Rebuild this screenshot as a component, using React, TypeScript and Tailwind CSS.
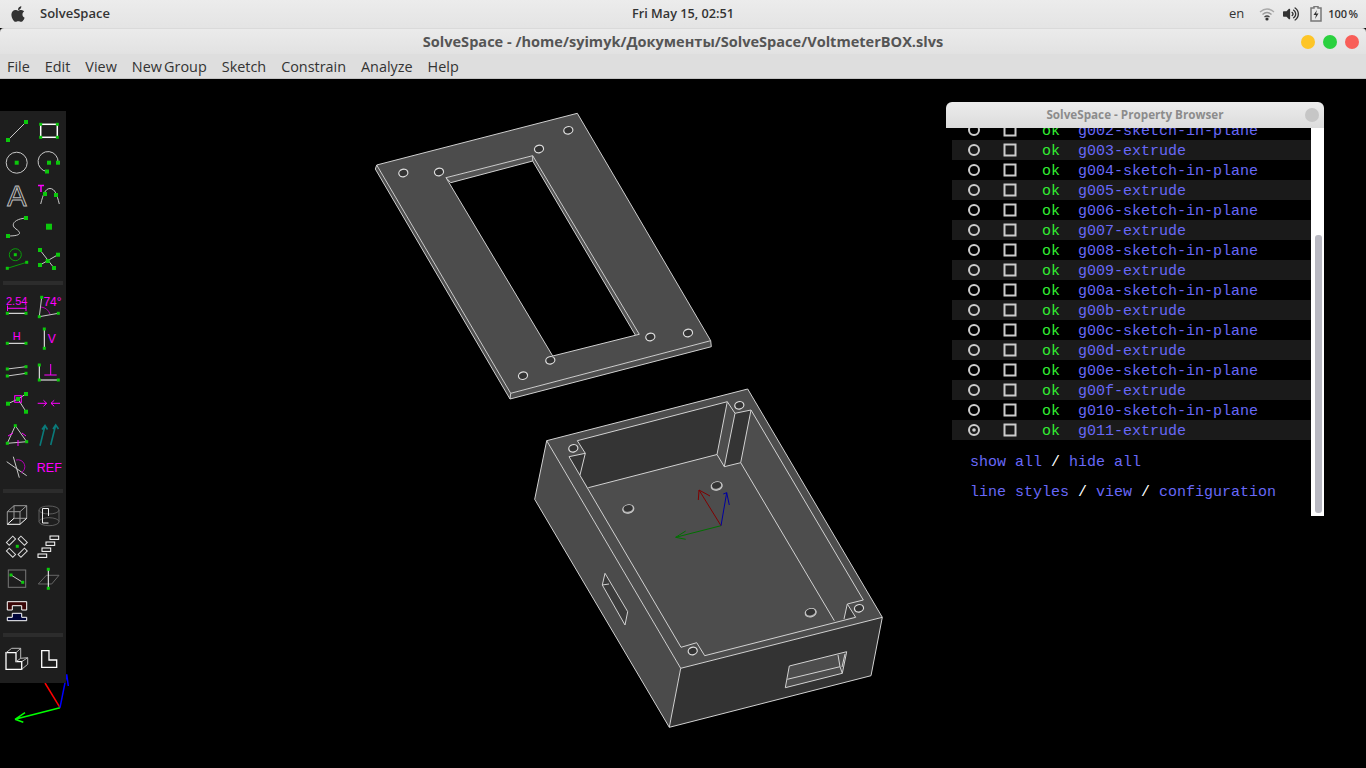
import React from "react";
import { FaApple, FaVolumeUp } from "react-icons/fa";

const GREEN = "#0cc80c";
const MAG = "#ff00ff";
const LN = "#c8c8c8";

const G = ({ x, y, s = 4 }: { x: number; y: number; s?: number }) => (
  <rect x={x - s / 2} y={y - s / 2} width={s} height={s} fill={GREEN} />
);
const L = ({ d, c = LN, w = 1 }: { d: string; c?: string; w?: number }) => (
  <path d={d} stroke={c} strokeWidth={w} fill="none" />
);
const T = ({ x, y, s, children, c = MAG, fam = "'Liberation Sans',sans-serif" }: { x: number; y: number; s: number; children: React.ReactNode; c?: string; fam?: string }) => (
  <text x={x} y={y} fontSize={s} fill={c} textAnchor="middle" fontFamily={fam}>{children}</text>
);

const Icon = ({ children, dy = 0 }: { children: React.ReactNode; dy?: number }) => (
  <svg width="32" height="32" viewBox={`0 ${dy} 32 32`} className="block">{children}</svg>
);

const section1 = [
  <Icon><L d="M7 25L25 7" /><G x={7} y={25} /><G x={25} y={7} /></Icon>,
  <Icon><rect x="7.7" y="9.3" width="16.6" height="13" fill="none" stroke="#fff" strokeWidth="1.5" /><G x={7.7} y={9.3} s={3} /><G x={24.3} y={9.3} s={3} /><G x={7.7} y={22.3} s={3} /><G x={24.3} y={22.3} s={3} /></Icon>,
  <Icon><circle cx="15.7" cy="15.7" r="10.5" fill="none" stroke={LN} /><G x={15.7} y={15.7} /></Icon>,
  <Icon><L d="M14 24.5A10 10 0 1 1 25 15.7" /><G x={16} y={15.7} /><G x={25} y={15.7} /><G x={14} y={24.5} /></Icon>,
  <Icon><text x="16" y="27" fontSize="29" textAnchor="middle" fill="none" stroke="#bbb" strokeWidth="1" fontFamily="'Liberation Sans',sans-serif">A</text></Icon>,
  <Icon><L d="M7.7 25C10 16 12 9.5 17 9.5C22 9.5 24 16 26.3 25" /><G x={12} y={15} /><G x={23} y={16} /><L d="M5 6.5H11M8 6.5V13" c={MAG} w={1.5} /></Icon>,
  <Icon><L d="M7 25C20 25 21 22 15 18C9 14 13 8 25 7" /><G x={7} y={25} /><G x={25} y={7} /></Icon>,
  <Icon><G x={16} y={15.7} s={6} /></Icon>,
  <Icon><circle cx="14.3" cy="11.7" r="6" fill="none" stroke="#0a9a0a" /><L d="M6.3 25.3L25.7 19.3" c="#0a9a0a" /><G x={14.3} y={11.7} s={3} /><G x={6.3} y={25.3} s={3} /><G x={25.7} y={19.3} s={3} /></Icon>,
  <Icon><L d="M7 7L21 25M7 22L25 11.7" /><G x={7} y={7} /><G x={25} y={11.7} /><G x={7} y={22} /><G x={21} y={25} /><G x={14.7} y={18} /></Icon>,
];

const section2 = [
  <Icon><T x={15.7} y={15} s={11}>2.54</T><L d="M6.3 18.3H25M6.5 15.5V21M25 15.5V21" c={MAG} /><L d="M6.3 23.3H25" c="#fff" /><G x={6.3} y={23.3} s={3} /><G x={25} y={23.3} s={3} /></Icon>,
  <Icon><T x={19.5} y={15.5} s={12}>74°</T><L d="M8.7 7.3L6.3 26.7L25.3 23.3" /><L d="M17 24A11 11 0 0 0 8 17" c="#b000b0" /><G x={8.7} y={7.3} s={3} /><G x={6.3} y={26.7} s={3} /><G x={25.3} y={23.3} s={3} /></Icon>,
  <Icon><T x={15.7} y={18} s={11}>H</T><L d="M6.3 21.3H25" c="#fff" /><G x={6.3} y={21.3} s={3} /><G x={25} y={21.3} s={3} /></Icon>,
  <Icon><L d="M11.3 7V26.3" c="#fff" /><G x={11.3} y={7} s={3} /><G x={11.3} y={26.3} s={3} /><T x={18.7} y={21} s={12}>V</T></Icon>,
  <Icon dy={-1}><L d="M6.3 14L25 11.7M6.3 21L25 18.3" /><G x={6.3} y={14} s={3} /><G x={25} y={11.7} s={3} /><G x={6.3} y={21} s={3} /><G x={25} y={18.3} s={3} /></Icon>,
  <Icon dy={-1}><L d="M6.3 10V25H25.3" c="#fff" /><L d="M11.3 20H23.7M17.7 9V20" c={MAG} /><G x={6.3} y={10} s={3} /><G x={6.3} y={25} s={3} /><G x={25.3} y={25} s={3} /></Icon>,
  <Icon dy={-1}><L d="M7 16.7L17 12L25 24.7M17 12L25 7" /><G x={7} y={16.7} /><G x={25} y={7} /><G x={25} y={24.7} /><G x={17} y={12} /><rect x="13.7" y="8.7" width="6.6" height="6.6" fill="none" stroke={MAG} /></Icon>,
  <Icon dy={-1}><L d="M4.7 16.3H13.7M10.5 13.3L13.7 16.3L10.5 19.3M27 16.3H18M21.2 13.3L18 16.3L21.2 19.3" c={MAG} /></Icon>,
  <Icon dy={-1}><L d="M14.3 6.7L6.3 24.3L25.7 22.7Z" /><L d="M7 17L12 14M21 14L25 17M17 21V27" c={MAG} /><G x={14.3} y={6.7} s={3} /><G x={6.3} y={24.3} s={3} /><G x={25.7} y={22.7} s={3} /></Icon>,
  <Icon dy={-1}><L d="M7 26.7L12 6.5M9 10.5L12 6.5L14.5 10.5M17.7 26L22.7 6M20 10L22.7 6L25.5 10" c="#0a7a7a" w={1.6} /></Icon>,
  <Icon dy={-1}><L d="M5.7 10.7L25.7 24.7M12.3 5.7L18.3 26.7" /><L d="M15 9A7 7 0 0 1 20 22" c="#b000b0" /></Icon>,
  <Icon dy={-1}><T x={16.3} y={20.5} s={12.5}>REF</T></Icon>,
];

const section3 = [
  <Icon><L d="M13 6.7H25.7V19.3H13ZM6.3 12.7H19V25.3M6.3 12.7V25.3M6.3 12.7L13 6.7M19 12.7L25.7 6.7" c="#999" /><L d="M6.3 25.3H19L25.7 19.3M6.3 25.3L13 19.3" c="#fff" /></Icon>,
  <Icon><ellipse cx="16" cy="11" rx="10" ry="4" fill="none" stroke="#5c5c5c" /><ellipse cx="16" cy="22.7" rx="10" ry="4" fill="none" stroke="#5c5c5c" /><L d="M6 11V22.7M26 11V22.7" c="#5c5c5c" /><L d="M15.5 9.5H9.5V24H15.5" c="#eee" /><L d="M15.5 9.5V17" c="#eee" /></Icon>,
  <Icon>
    <rect x="5.5" y="7.7" width="9" height="4" transform="rotate(-45 10 9.7)" fill="none" stroke="#ddd" />
    <rect x="17.2" y="7.7" width="9" height="4" transform="rotate(45 21.7 9.7)" fill="none" stroke="#ddd" />
    <rect x="5.5" y="19.7" width="9" height="4" transform="rotate(45 10 21.7)" fill="none" stroke="#ddd" />
    <rect x="17.2" y="19.7" width="9" height="4" transform="rotate(-45 21.7 21.7)" fill="none" stroke="#ddd" />
    <G x={16.3} y={15.3} s={3} />
  </Icon>,
  <Icon>{[[17, 5], [13, 11], [9, 17], [5, 23]].map(([x, y]) => <rect key={y} x={x} y={y} width="8.7" height="3.4" fill="none" stroke="#fff" />)}</Icon>,
  <Icon><rect x="7.3" y="7" width="17.4" height="17.3" fill="none" stroke="#777" /><L d="M10 12L21.7 19.3" /><G x={10} y={12} s={3} /><G x={21.7} y={19.3} s={3} /></Icon>,
  <Icon><path d="M5.3 21L13.3 12.3H26L18.7 21Z" fill="none" stroke="#666" /><L d="M15.3 6.3V25.3" c="#fff" /><G x={15.3} y={6.3} s={3} /><G x={15.3} y={25.3} s={3} /></Icon>,
  <Icon><path d="M6.3 6.7H25.7V15H20.7V10.7H11.3V15H6.3Z" fill="#3a0606" stroke="#fff" /><path d="M6.3 25.7V22.3H11.3V18.3H20.7V22.3H25.7V25.7Z" fill="#00063a" stroke="#fff" /></Icon>,
  <div />,
];

const section4 = [
  <Icon><L d="M5 9.7H15V18.7H20.7V26.3H5Z" c="#fff" w={1.3} /><L d="M5 9.7L10.7 5.3H19.7V15.3M15 9.7L19.7 5.3M15 18.7L19.7 15.3L26.7 14.7V21.3L20.7 26.3M20.7 18.7L26.7 14.7" c="#bbb" /></Icon>,
  <Icon><L d="M8.7 7.7H16V17H23.7V24.3H8.7Z" c="#fff" w={1.3} /></Icon>,
];

const groups = [
  "g002-sketch-in-plane", "g003-extrude", "g004-sketch-in-plane", "g005-extrude",
  "g006-sketch-in-plane", "g007-extrude", "g008-sketch-in-plane", "g009-extrude",
  "g00a-sketch-in-plane", "g00b-extrude", "g00c-sketch-in-plane", "g00d-extrude",
  "g00e-sketch-in-plane", "g00f-extrude", "g010-sketch-in-plane", "g011-extrude",
];

const Hole = ({ x, y, dark = "#2a2a2a", rx = 4.6, ry = 3.7 }: { x: number; y: number; dark?: string; rx?: number; ry?: number }) => (
  <ellipse cx={x} cy={y} rx={rx} ry={ry} transform={`rotate(-15 ${x} ${y})`} fill={dark} stroke="#ddd" strokeWidth="1.2" />
);

const Model = () => (
  <svg className="absolute inset-0" width="1366" height="689" viewBox="0 79 1366 689">
    {/* lid */}
    <path d="M375.3 169L376.7 165L510.7 393.3L710.7 340.7L711.3 346.7L510 399Z" fill="#4f4f4f" />
    <path d="M376.7 165L577.3 113.3L710.7 340.7L510.7 393.3Z" fill="#4c4c4c" />
    <path d="M446 177.7L532.7 155.7L639.3 334.3L552.7 356Z" fill="#000" />
    <path d="M446 177.7L532.7 155.7L639.3 334.3L635.3 335L532.7 161L450.7 182.7Z" fill="#555" />
    <g stroke="#cfcfcf" fill="none" strokeWidth="1">
      <path d="M375.3 169L510 399L711.3 346.7L710.7 340.7L577.3 113.3L376.7 165L510.7 393.3L710.7 340.7" />
      <path d="M376.7 165L375.3 169M510.7 393.3L510 399" />
      <path d="M446 177.7L532.7 155.7L639.3 334.3L552.7 356Z" />
      <path d="M450.7 182.7L532.7 161L635.3 335M446 177.7L450.7 182.7M532.7 155.7V161" />
    </g>
    {[[403.3, 173], [439, 172], [539, 149], [568.3, 130.3], [650.3, 337], [688, 333], [550.3, 360.3], [523, 375.7]].map(([x, y]) => (
      <Hole key={x} x={x} y={y} dark="#333" />
    ))}

    {/* box */}
    <path d="M546.7 440.7L534.7 499.3L669.3 727.3L680.7 668.3Z" fill="#4b4b4b" />
    <path d="M680.7 668.3L669.3 727.3L871 675.7L882.3 617.3Z" fill="#333" />
    <path d="M546.7 440.7L747.7 389L882.3 617.3L680.7 668.3Z" fill="#4d4d4d" />
    <path d="M577.3 440.7L727.3 401.7L717 454.5L588.3 487.7L580 475L585.3 453.3Z" fill="#343434" />
    <path d="M569 456.7L585.3 453.3L580 475Z" fill="#343434" />
    <path d="M735 413.3L751 410L740.7 462.7L724.3 466.7Z" fill="#343434" />
    <path d="M847.3 604L855 616L844 619Z" fill="#3a3a3a" />
    <path d="M789.3 666L846.7 651.7L842.3 673.3L785.3 687.7Z" fill="#4d4d4d" />
    <path d="M602.3 585L605 573.3L627.7 611.7L625 625Z" fill="#3c3c3c" />
    <g stroke="#d2d2d2" fill="none" strokeWidth="1">
      <path d="M546.7 440.7L534.7 499.3L669.3 727.3L871 675.7L882.3 617.3L747.7 389L546.7 440.7L680.7 668.3L882.3 617.3" />
      <path d="M680.7 668.3L669.3 727.3" />
      <path d="M577.3 440.7L727.3 401.7L717 454.5L588.3 487.7" />
      <path d="M577.3 440.7L585.3 453.3L569 456.7L681 647.3L696.7 642.7L704.7 655.7L855.7 617.3L847.3 604L863.3 600L751 410L735 413.3L727.3 401.7" />
      <path d="M585.3 453.3L580 475M847.3 604L844 619" />
      <path d="M717 454.5L724.3 466.7L740.7 462.7L834.3 620.7M735 413.3L724.3 466.7M751 410L740.7 462.7" />
      <path d="M605 573.3L627.7 611.7L625 625L602.3 585L605 573.3M602.3 585L609 584" />
      <path d="M789.3 666L846.7 651.7L842.3 673.3L785.3 687.7L789.3 666M787.3 679.3L840 666.7L838 655M840 666.7L842.3 673.3M845 654L842 667" />
    </g>
    {[[573.3, 448.3], [739.3, 405.3], [692.7, 651], [859, 608.3]].map(([x, y]) => <Hole key={x} x={x} y={y} dark="#333" />)}
    {[[628.3, 509], [716.7, 486], [810.7, 612.7]].map(([x, y]) => (
      <g key={x}>
        <ellipse cx={x} cy={y} rx={5.6} ry={4.2} transform={`rotate(-15 ${x} ${y})`} fill="#aaa" stroke="#ccc" />
        <ellipse cx={x} cy={y - 0.6} rx={4.6} ry={3.2} transform={`rotate(-15 ${x} ${y})`} fill="#333" />
      </g>
    ))}

    {/* axes at the origin */}
    <g fill="none" strokeWidth="1">
      <path d="M721 525.7L699 490M699 490L710 496M699 490L698.3 500" stroke="#800000" />
      <path d="M721 525.7L675.7 537.3M675.7 537.3L685.7 531M675.7 537.3L685.7 539.3" stroke="#007000" />
      <path d="M721 525.7L726.7 492.7M726.7 492.7L723.3 494M726.7 492.7L729.3 505" stroke="#0000a0" />
    </g>
    {/* view axes */}
    <g fill="none" strokeWidth="1.5">
      <path d="M60 707.7L45 683" stroke="#ff0000" />
      <path d="M60 707.7L15 719.3M15 719.3L25 712.7M15 719.3L23.3 722.3" stroke="#00ff00" />
      <path d="M60 707.7L66.7 674.3M66.7 674.3L68.3 686" stroke="#0000ff" />
    </g>
  </svg>
);

const Sep = ({ cls }: { cls: string }) => <div className={`mx-[3px] h-[4px] bg-[#2c2c2c] ${cls}`} />;
const Cells = ({ items }: { items: React.ReactNode[] }) => (
  <div className="grid grid-cols-[32px_32px] pl-[1px]">
    {items.map((it, i) => <div key={i} className="h-[32px]">{it}</div>)}
  </div>
);

const mono = "font-['Liberation_Mono',monospace] text-[15px] leading-[20px]";

export default function App() {
  return (
    <div className="flex h-[768px] w-[1366px] flex-col overflow-hidden bg-black font-['Open_Sans',sans-serif]">
      {/* system bar */}
      <div className="grid h-[28px] grid-cols-3 items-center bg-gradient-to-b from-[#ececec] to-[#e4e4e4] text-[#333]">
        <div className="flex items-center">
          <FaApple className="ml-[9px] text-[#333]" size={18} />
          <span className="ml-[13px] text-[13px] font-semibold">SolveSpace</span>
        </div>
        <div className="text-center text-[12.7px] font-semibold">Fri May 15, 02:51</div>
        <div className="flex items-center justify-end">
          <span className="text-[13px]">en</span>
          <svg width="16" height="14" viewBox="0 0 16 14" className="ml-[15px]">
            <path d="M1 5Q8 -1 15 5" stroke="#aaa" strokeWidth="1.3" fill="none" />
            <path d="M3.5 7.5Q8 3.5 12.5 7.5" stroke="#999" strokeWidth="1.3" fill="none" />
            <path d="M5.5 10Q8 8 10.5 10" stroke="#444" strokeWidth="1.3" fill="none" />
            <circle cx="8" cy="12" r="1.6" fill="#333" />
          </svg>
          <FaVolumeUp className="ml-[8px] text-[#333]" size={16} />
          <svg width="12" height="16" viewBox="0 0 12 16" className="ml-[11px]">
            <path d="M4 0.5H8V2H11V15H1V2H4Z" fill="none" stroke="#777" strokeWidth="1.5" />
            <path d="M7 4L3.5 9H6L5 13L8.5 7.5H6Z" fill="#333" />
          </svg>
          <span className="ml-[6px] mr-[8px] text-[11px] font-semibold [word-spacing:-1.5px]">100 %</span>
        </div>
      </div>

      {/* title bar */}
      <div className="relative flex h-[26px] items-center justify-center rounded-t-[4px] border-t border-[#dadada] bg-gradient-to-b from-[#ebebeb] to-[#e2e2e2]">
        <span className="text-[14.55px] font-bold text-[#555]">SolveSpace - /home/syimyk/Документы/SolveSpace/VoltmeterBOX.slvs</span>
        <div className="absolute right-[7px] top-[6px] flex gap-[8px]">
          <div className="h-[14px] w-[14px] rounded-full bg-[#fdc527]" />
          <div className="h-[14px] w-[14px] rounded-full bg-[#2ad13f]" />
          <div className="h-[14px] w-[14px] rounded-full bg-[#f85e58]" />
        </div>
      </div>

      {/* menu bar */}
      <div className="flex h-[25px] items-center gap-[15px] border-b border-[#c4c4c4] bg-[#dedede] pl-[7px] pt-[2px] text-[14.4px] text-[#333] [word-spacing:-1.5px]">
        {["File", "Edit", "View", "New Group", "Sketch", "Constrain", "Analyze", "Help"].map((m) => (
          <span key={m}>{m}</span>
        ))}
      </div>

      {/* canvas */}
      <div className="relative flex-1 bg-black">
        <Model />

        <div className="absolute left-0 top-[32px] w-[66px] bg-[#1e1e1e] pb-[8px] pt-[4px]">
          <Cells items={section1} />
          <Sep cls="mb-[5px] mt-[6px]" />
          <Cells items={section2} />
          <Sep cls="mb-[6px] mt-[7px]" />
          <Cells items={section3} />
          <Sep cls="mb-[6px] mt-[6px]" />
          <Cells items={section4} />
        </div>

        {/* property browser */}
        <div className="absolute left-[946px] top-[23px] flex h-[414px] w-[378px] flex-col overflow-hidden rounded-t-[6px]">
          <div className="relative flex h-[26px] shrink-0 items-center justify-center bg-gradient-to-b from-[#ececec] to-[#dcdcdc]">
            <span className="text-[11.7px] font-bold text-[#8c8c8c]">SolveSpace - Property Browser</span>
            <div className="absolute right-[5px] top-[6px] h-[14px] w-[14px] rounded-full bg-[#c6c6c6]" />
          </div>
          <div className="flex min-h-0 flex-1">
            <div className={`min-w-0 flex-1 overflow-hidden bg-black ${mono}`}>
              <div className="-mt-[8px] pl-[6px]">
                {groups.map((name, i) => (
                  <div key={name} className={`flex h-[20px] items-center pl-[15px] ${i % 2 ? "bg-[#1a1a1a]" : ""}`}>
                    <svg width="14" height="14" viewBox="0 0 14 14" className="shrink-0">
                      <circle cx="7" cy="7" r="5" fill="none" stroke="#ccc" strokeWidth="2" />
                      {name === "g011-extrude" && <circle cx="7" cy="7" r="1.8" fill="#ccc" />}
                    </svg>
                    <svg width="14" height="14" viewBox="0 0 14 14" className="ml-[22px] shrink-0">
                      <rect x="1.5" y="1.5" width="11" height="11" fill="none" stroke="#ccc" strokeWidth="2" />
                    </svg>
                    <span className="ml-[25px] w-[36px] pt-[4px] text-[#33f033]">ok</span>
                    <span className="pt-[4px] text-[#6868f8]">{name}</span>
                  </div>
                ))}
              </div>
              <div className="mt-[11px] pl-[24px] pt-[2px] text-[#6868f8]">
                show all <span className="text-white">/</span> hide all
              </div>
              <div className="mt-[10px] pl-[24px] text-[#6868f8]">
                line styles <span className="text-white">/</span> view <span className="text-white">/</span> configuration
              </div>
            </div>
            <div className="w-[13px] shrink-0 bg-white pl-[4px]">
              <div className="mt-[107px] h-[278px] w-[7px] rounded-[3px] bg-[#b9b9c2]" />
            </div>
          </div>
        </div>
      </div>
    </div>
  );
}
